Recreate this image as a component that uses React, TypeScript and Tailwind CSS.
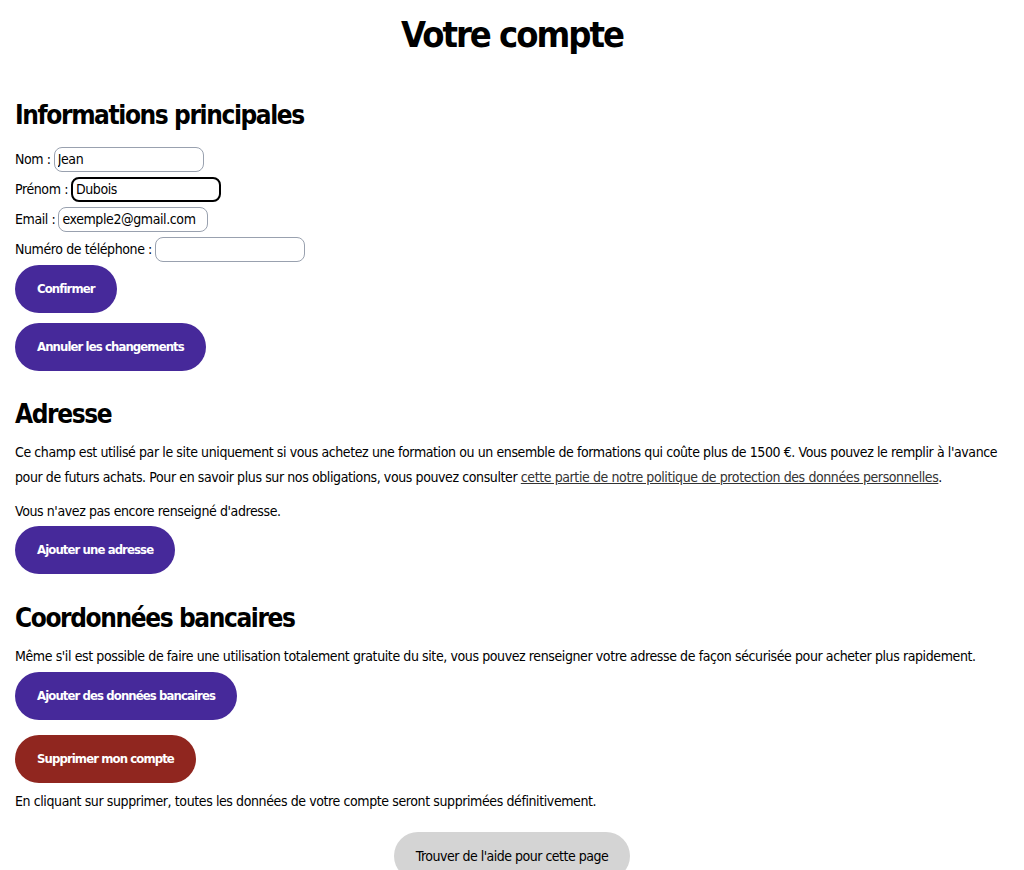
import React from 'react';

const font = { fontFamily: '"DejaVu Sans Condensed", "Liberation Sans Narrow", sans-serif' };

function Field({ label, value, focused = false }: { label: string; value: string; focused?: boolean }) {
  return (
    <div className="flex items-center h-[30px] text-[14px] tracking-[-0.4px]">
      <span>{label} :</span>
      <input
        defaultValue={value}
        className={`ml-[3px] h-[25px] w-[150px] px-[3px] rounded-lg bg-white text-black text-[14px] tracking-[-0.4px] outline-none ${focused ? 'border-2 border-black' : 'border border-gray-400'}`}
        style={font}
      />
    </div>
  );
}

function Btn({ children, red = false }: { children: React.ReactNode; red?: boolean }) {
  return (
    <button
      className={`h-[48px] px-[22px] rounded-full text-white text-[13px] tracking-[-0.9px] font-bold ${red ? 'bg-[#90261f]' : 'bg-[#46299a]'}`}
      style={font}
    >
      {children}
    </button>
  );
}

export default function App() {
  return (
    <div className="min-h-[870px] bg-white text-black px-[15px] text-[14px] tracking-[-0.4px]" style={font}>
      <h1 className="text-center text-[36px] tracking-[-2px] font-bold leading-[70px]">Votre compte</h1>

      <h2 className="mt-[20px] text-[26px] tracking-[-1.4px] font-bold leading-[50px]">Informations principales</h2>
      <div className="flex flex-col mt-[4px]">
        <Field label="Nom" value="Jean" />
        <Field label="Prénom" value="Dubois" focused />
        <Field label="Email" value="exemple2@gmail.com" />
        <Field label="Numéro de téléphone" value="" />
      </div>
      <div className="flex flex-col items-start gap-[10px] mt-[1px]">
        <Btn>Confirmer</Btn>
        <Btn>Annuler les changements</Btn>
      </div>

      <h2 className="mt-[18px] text-[26px] tracking-[-1.4px] font-bold leading-[50px]">Adresse</h2>
      <p className="mt-[1px] leading-[25px]">
        Ce champ est utilisé par le site uniquement si vous achetez une formation ou un ensemble de formations qui coûte plus de 1500 €. Vous pouvez le remplir à l'avance pour de futurs achats. Pour en savoir plus sur nos obligations, vous pouvez consulter{' '}
        <a href="#" className="underline text-[#333]">cette partie de notre politique de protection des données personnelles</a>.
      </p>
      <p className="mt-[10px] leading-[22px]">Vous n'avez pas encore renseigné d'adresse.</p>
      <div className="mt-[4px]">
        <Btn>Ajouter une adresse</Btn>
      </div>

      <h2 className="mt-[19px] text-[26px] tracking-[-1.4px] font-bold leading-[50px]">Coordonnées bancaires</h2>
      <p className="mt-[1px] leading-[25px]">
        Même s'il est possible de faire une utilisation totalement gratuite du site, vous pouvez renseigner votre adresse de façon sécurisée pour acheter plus rapidement.
      </p>
      <div className="flex flex-col items-start gap-[15px] mt-[3px]">
        <Btn>Ajouter des données bancaires</Btn>
        <Btn red>Supprimer mon compte</Btn>
      </div>
      <p className="mt-[6px] leading-[25px]">
        En cliquant sur supprimer, toutes les données de votre compte seront supprimées définitivement.
      </p>

      <div className="flex justify-center mt-[18px]">
        <button className="h-[48px] px-[22px] rounded-full bg-[#d4d4d4] text-black text-[14px] tracking-[-0.5px]" style={font}>
          Trouver de l'aide pour cette page
        </button>
      </div>
    </div>
  );
}
